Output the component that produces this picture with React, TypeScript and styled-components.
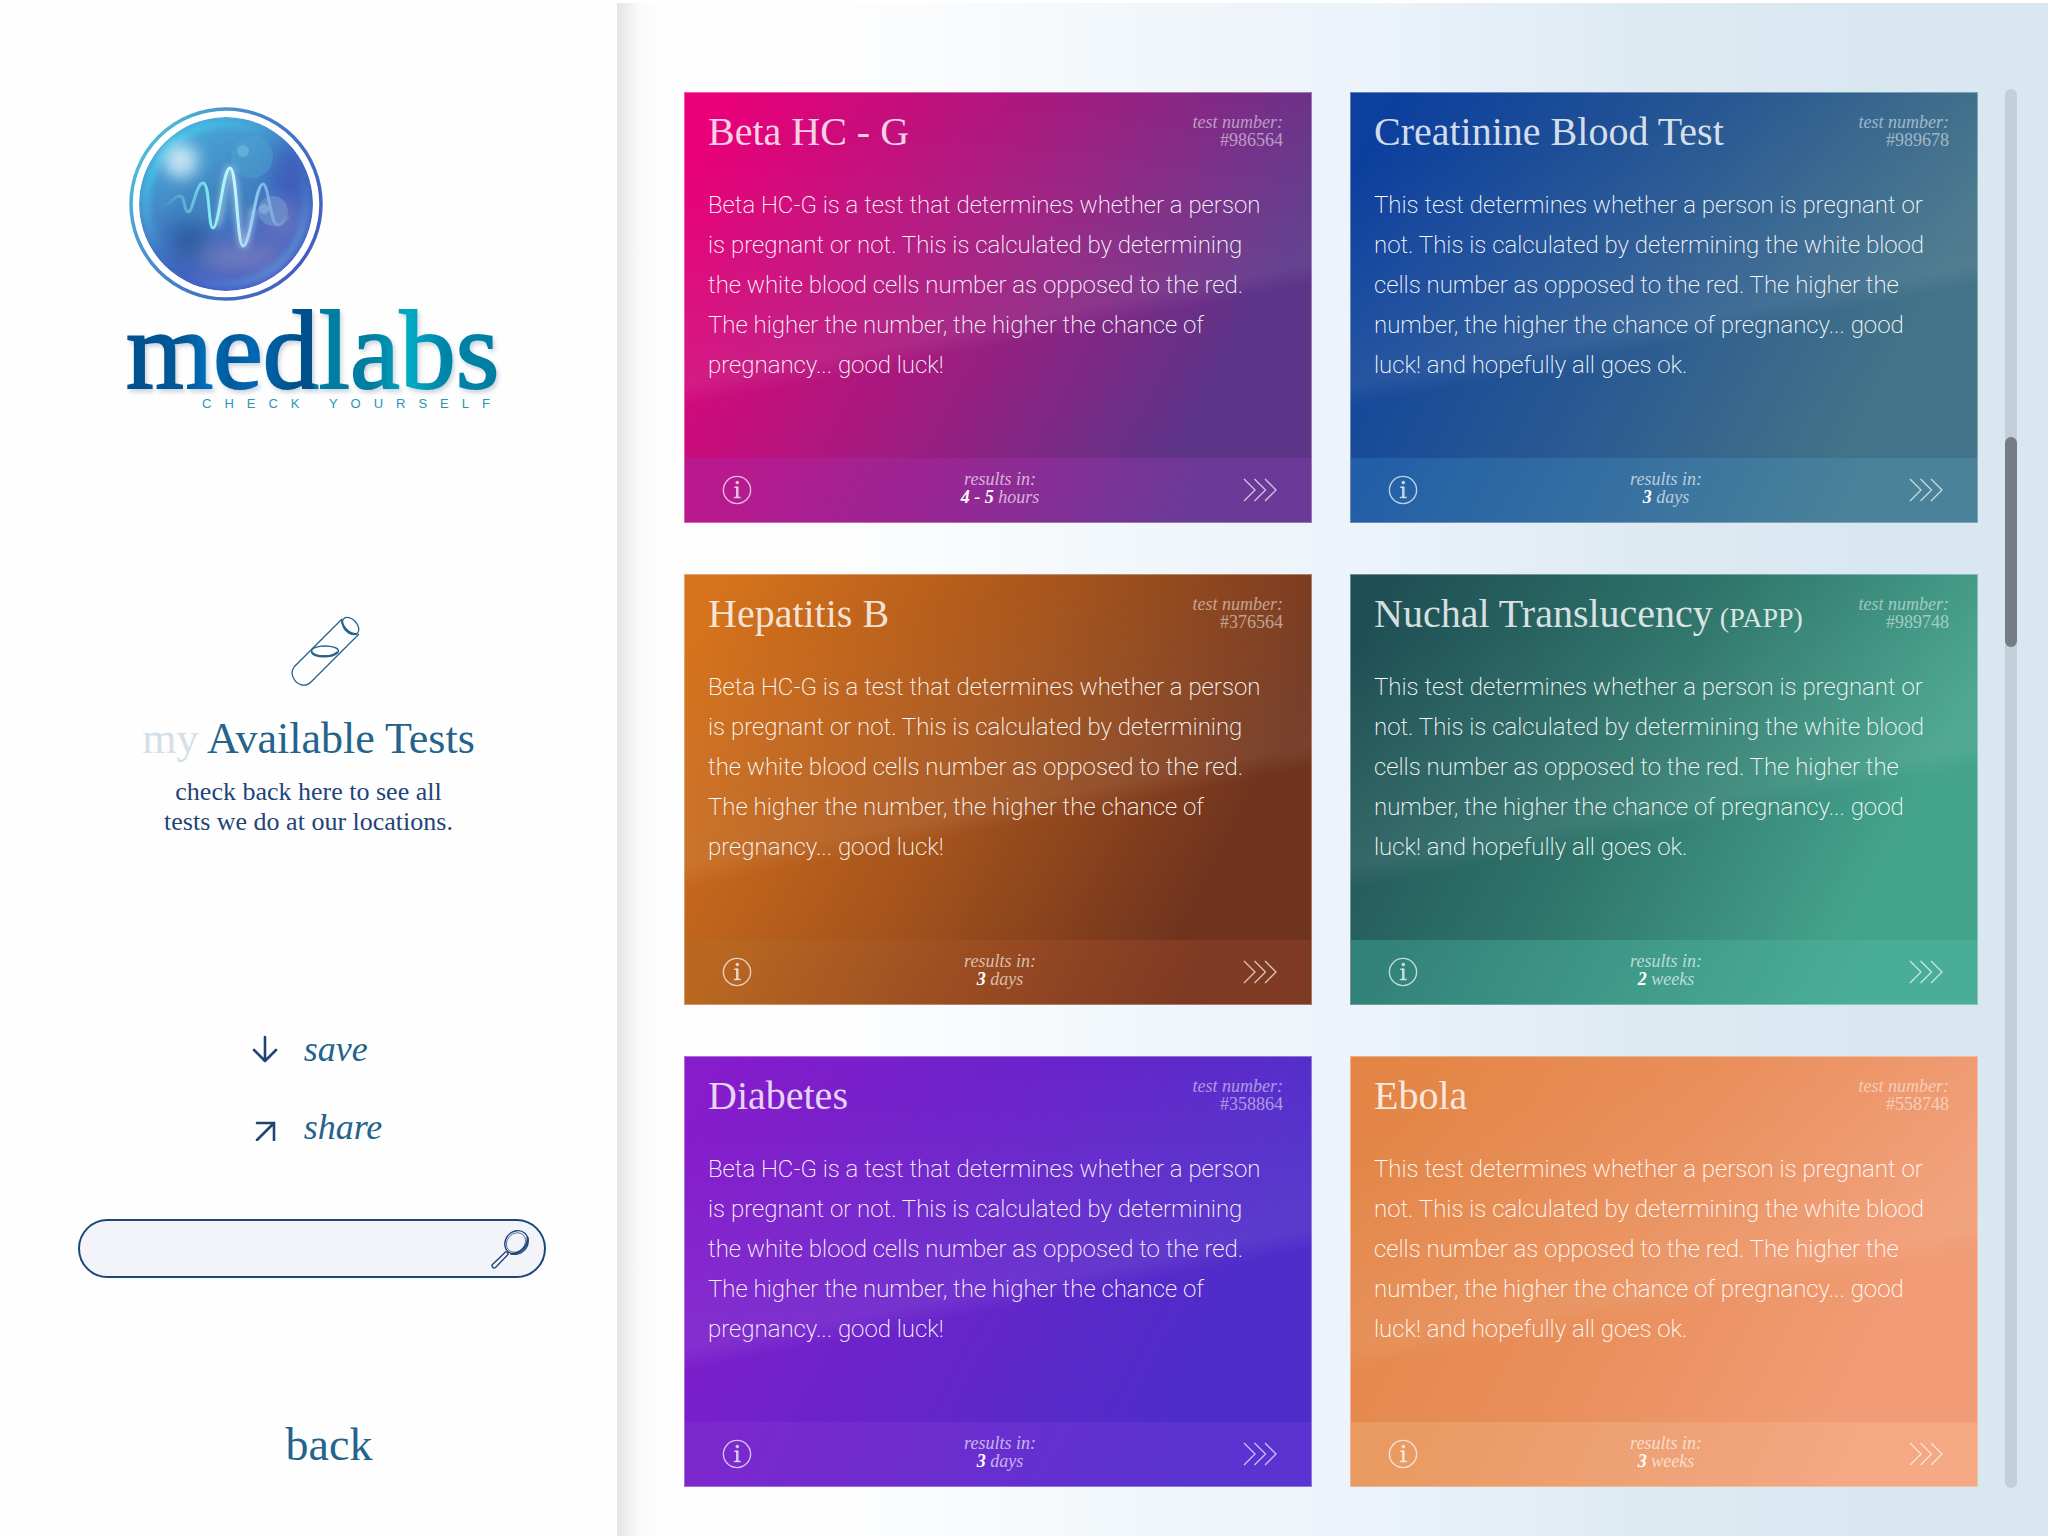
import React from "react";
import styled, { createGlobalStyle } from "styled-components";

const serif = `"Liberation Serif", "Times New Roman", serif`;
const sans = `Roboto, "Liberation Sans", Arial, sans-serif`;

const GlobalStyle = createGlobalStyle`
  *, *::before, *::after { box-sizing: border-box; }
  body { margin: 0; background: #fff; font-family: ${serif}; }
  h1, h2, p, dl, dd, dt { margin: 0; font-weight: 400; }
  button { padding: 0; border: 0; background: none; font: inherit; color: inherit; cursor: pointer; }
`;

const Page = styled.div`
  display: flex;
  min-height: 100vh;
`;

const Sidebar = styled.aside`
  flex: 0 0 617px;
  display: flex;
  flex-direction: column;
  align-items: center;
  padding: 107px 71px 0 78px;
  background: #fefefe;
  color: #24638c;
`;

const Brand = styled.div`
  align-self: flex-start;
  display: flex;
  flex-direction: column;
  width: 420px;
  padding-left: 48px;
`;

const Orb = styled.svg`
  width: 200px;
  height: 196px;
`;

const Wordmark = styled.span`
  font-size: 112px;
  line-height: 94px;
  white-space: nowrap;
  color: transparent;
  background: linear-gradient(90deg, #00508c 0%, #00599a 16%, #0070bd 22%, #005a9c 28%, #0069b2 34%, #00508c 46%, #00508c 50%, #007ea2 51%, #007ea2 66%, #00abc4 76%, #0084a8 86%, #007ea2 100%);
  background-clip: text;
  -webkit-background-clip: text;
  -webkit-text-stroke: 2px transparent;
  filter: drop-shadow(2px 3px 2px rgba(60, 80, 120, 0.25));
`;

const Tagline = styled.span`
  padding-left: 76px;
  font-family: "Liberation Sans", Arial, sans-serif;
  font-size: 13px;
  line-height: 14px;
  letter-spacing: 13px;
  white-space: nowrap;
  color: #2a95b2;
`;

const Intro = styled.section`
  display: flex;
  flex-direction: column;
  align-items: center;
  margin-top: 204px;
  padding-right: 7px;
  text-align: center;
`;

const TubeIcon = styled.svg`
  width: 72px;
  height: 72px;
  margin-left: 32px;
`;

const IntroTitle = styled.h1`
  margin-top: 24px;
  font-size: 44px;
  line-height: 56px;
  white-space: nowrap;
`;

const Faded = styled.span`
  color: #d3e0e8;
`;

const IntroText = styled.p`
  margin-top: 10px;
  font-size: 26px;
  line-height: 30px;
  color: #1f4478;
`;

const Actions = styled.nav`
  display: flex;
  flex-direction: column;
  gap: 38px;
  margin-top: 192px;
  padding-left: 10px;
`;

const ActionButton = styled.button`
  display: flex;
  align-items: center;
  gap: 24px;
  font-size: 36px;
  font-style: italic;
  line-height: 40px;

  svg { width: 28px; height: 28px; color: #1f4478; }
`;

const SearchBox = styled.form`
  display: flex;
  align-items: center;
  align-self: stretch;
  height: 59px;
  margin-top: 72px;
  padding: 0 14px 0 24px;
  border: 2px solid #1f4678;
  border-radius: 30px;
  background: #f3f4fa;
`;

const SearchInput = styled.input`
  flex: 1;
  min-width: 0;
  border: 0;
  outline: 0;
  background: none;
  font-family: ${sans};
  font-size: 24px;
  color: #1f4478;
`;

const SearchButton = styled.button`
  display: flex;
  svg { width: 40px; height: 40px; }
`;

const BackLink = styled.a`
  margin-top: 140px;
  padding-left: 34px;
  font-size: 46px;
  line-height: 54px;
  color: inherit;
  text-decoration: none;
`;

const Main = styled.main`
  flex: 1;
  min-width: 0;
  display: flex;
  gap: 27px;
  padding: 86px 31px 48px 67px;
  border-top: 3px solid #fff;
  background:
    linear-gradient(90deg, #e4e4e6 0, rgba(245, 245, 246, 0.6) 20px, rgba(255, 255, 255, 0) 42px),
    linear-gradient(90deg, #fefefe 15%, #f6fafd 28%, #eef4f9 44%, #ecf3fb 52%, #dfebf3 70%, #d9e7f0 88%);
`;

const CardGrid = styled.div`
  flex: 1;
  display: grid;
  grid-template-columns: repeat(2, minmax(0, 1fr));
  align-content: start;
  gap: 51px 38px;
  padding-top: 3px;
`;

const Card = styled.article<{ $fill: string }>`
  display: flex;
  flex-direction: column;
  min-height: 431px;
  border: 1px solid rgba(255, 255, 255, 0.35);
  background:
    linear-gradient(169deg, rgba(255, 255, 255, 0) 14%, rgba(255, 255, 255, 0.07) 53%, rgba(255, 255, 255, 0) 57%),
    ${(p) => p.$fill};
  background-origin: border-box;
  color: #fff;
`;

const CardHead = styled.header`
  display: flex;
  justify-content: space-between;
  align-items: flex-start;
  padding: 16px 28px 0 23px;
`;

const CardTitle = styled.h2`
  font-size: 40px;
  line-height: 46px;
  white-space: nowrap;
  color: rgba(255, 255, 255, 0.82);
`;

const TitleNote = styled.span`
  font-size: 28px;
  line-height: 28px;
`;

const TestNumber = styled.p`
  padding-top: 4px;
  font-size: 18px;
  line-height: 18px;
  text-align: right;
  white-space: nowrap;
  color: rgba(255, 255, 255, 0.52);
`;

const Description = styled.p`
  padding: 30px 40px 0 23px;
  font-family: ${sans};
  font-weight: 200;
  font-size: 24px;
  line-height: 40px;
`;

const CardFoot = styled.footer<{ $fill: string }>`
  display: grid;
  grid-template-columns: 1fr auto 1fr;
  align-items: center;
  height: 64px;
  margin-top: auto;
  padding: 0 33px 0 37px;
  background: ${(p) => p.$fill};
  color: rgba(255, 255, 255, 0.7);
`;

const IconButton = styled.button<{ $end?: boolean }>`
  display: flex;
  justify-self: ${(p) => (p.$end ? "end" : "start")};
  svg { width: ${(p) => (p.$end ? 36 : 30)}px; height: 30px; }
`;

const Results = styled.dl`
  padding-bottom: 4px;
  font-size: 18px;
  font-style: italic;
  line-height: 18px;
  text-align: center;
  color: rgba(255, 255, 255, 0.65);

  strong { color: #fff; }
`;

const ScrollTrack = styled.div`
  flex: 0 0 12px;
  display: grid;
  grid-template-rows: 348fr 210fr 841fr;
  border-radius: 6px;
  background: #c4d0d9;
`;

const ScrollThumb = styled.div`
  grid-row: 2;
  border-radius: 6px;
  background: #757c83;
`;

const BETA =
  "Beta HC-G is a test that determines whether a person is pregnant or not. This is calculated by determining the white blood cells number as opposed to the red. The higher the number, the higher the chance of pregnancy... good luck!";
const GENERAL =
  "This test determines whether a person is pregnant or not. This is calculated by determining the white blood cells number as opposed to the red. The higher the number, the higher the chance of pregnancy... good luck! and hopefully all goes ok.";

const fill = (a: string, b: string, c: string) =>
  `linear-gradient(118deg, ${a} 5%, ${b} 45%, ${c} 80%)`;

const TESTS = [
  { title: "Beta HC - G", num: "#986564", text: BETA, wait: "4 - 5", unit: "hours",
    body: fill("#ea0078", "#a31b80", "#5c3488"), foot: fill("#ba188e", "#942894", "#6b3a98") },
  { title: "Creatinine Blood Test", num: "#989678", text: GENERAL, wait: "3", unit: "days",
    body: fill("#0c3f9e", "#285892", "#437388"), foot: fill("#235fa7", "#3871a0", "#4a8299") },
  { title: "Hepatitis B", num: "#376564", text: BETA, wait: "3", unit: "days",
    body: fill("#d6731c", "#a6541c", "#70341e"), foot: fill("#b96821", "#9b4c22", "#7e3a23") },
  { title: "Nuchal Translucency", note: "(PAPP)", num: "#989748", text: GENERAL, wait: "2", unit: "weeks",
    body: fill("#1f4f55", "#30766b", "#44a38b"), foot: fill("#32817a", "#409a88", "#4aad98") },
  { title: "Diabetes", num: "#358864", text: BETA, wait: "3", unit: "days",
    body: fill("#861ccb", "#6824cb", "#4d2dc9"), foot: fill("#7c28cd", "#6a2ecf", "#5a33d0") },
  { title: "Ebola", num: "#558748", text: GENERAL, wait: "3", unit: "weeks",
    body: fill("#e28545", "#e98f5b", "#f19c76"), foot: fill("#e99a60", "#eea174", "#f4a884") },
];

const InfoIcon = () => (
  <svg viewBox="0 0 30 30" fill="none" stroke="currentColor">
    <circle cx="15" cy="15" r="13.6" strokeWidth="1.4" />
    <circle cx="15.3" cy="7.600" r="1.800" fill="currentColor" stroke="none" />
    <path d="M12.2 12.200h3.3M11.800 22.500h7" strokeWidth="1.4" />
    <path d="M15.3 11.600v10.900" strokeWidth="2.6" />
  </svg>
);

const ChevronsIcon = () => (
  <svg viewBox="0 0 36 30" fill="none" stroke="currentColor" strokeWidth="1.3">
    <path d="M2 4l11 11L2 26M12.500 4l11 11-11 11M23 4l11 11-11 11" />
  </svg>
);

const Logo = () => (
  <Orb viewBox="0 0 200 196" role="img" aria-label="medlabs">
    <defs>
      <linearGradient id="ring" x1="0" y1="0.2" x2="1" y2="0.8">
        <stop offset="0" stopColor="#50c6dc" />
        <stop offset="0.25" stopColor="#4a98cf" />
        <stop offset="0.6" stopColor="#4474c6" />
        <stop offset="1" stopColor="#4459c2" />
      </linearGradient>
      <linearGradient id="ball" x1="0.2" y1="0" x2="0.7" y2="1">
        <stop offset="0" stopColor="#48b0da" />
        <stop offset="0.4" stopColor="#458ac9" />
        <stop offset="0.7" stopColor="#4269c2" />
        <stop offset="1" stopColor="#4a57cb" />
      </linearGradient>
      <linearGradient id="wave" x1="0" x2="1" y1="0" y2="0">
        <stop offset="0" stopColor="#7fdfe8" stopOpacity="0.05" />
        <stop offset="0.18" stopColor="#7fdfe8" stopOpacity="0.5" />
        <stop offset="0.36" stopColor="#7fe6f0" />
        <stop offset="0.55" stopColor="#c4fbff" />
        <stop offset="0.75" stopColor="#8cc4ee" />
        <stop offset="1" stopColor="#8cc4ee" stopOpacity="0.2" />
      </linearGradient>
      <linearGradient id="rim" x1="0" y1="0" x2="1" y2="1">
        <stop offset="0.1" stopColor="#42d2f2" />
        <stop offset="0.45" stopColor="#42c2ee" stopOpacity="0" />
        <stop offset="0.6" stopColor="#5aa0e0" stopOpacity="0" />
        <stop offset="0.85" stopColor="#58a8d8" stopOpacity="0.7" />
      </linearGradient>
      <filter id="soft" x="-100%" y="-100%" width="300%" height="300%"><feGaussianBlur stdDeviation="11" /></filter>
      <filter id="glow" x="-50%" y="-50%" width="200%" height="200%"><feGaussianBlur stdDeviation="3" /></filter>
      <filter id="haze" x="-100%" y="-100%" width="300%" height="300%"><feGaussianBlur stdDeviation="8" /></filter>
      <clipPath id="inner"><circle cx="100" cy="97" r="87" /></clipPath>
    </defs>
    <circle cx="100" cy="97" r="95" fill="#fff" stroke="url(#ring)" strokeWidth="3.500" />
    <g clipPath="url(#inner)">
      <circle cx="100" cy="97" r="87" fill="url(#ball)" />
      <ellipse cx="166" cy="66" rx="20" ry="34" fill="#3a50b6" opacity="0.65" filter="url(#soft)" />
      <ellipse cx="64" cy="132" rx="20" ry="20" fill="#27528f" opacity="0.7" filter="url(#soft)" />
      <ellipse cx="95" cy="94" rx="46" ry="26" fill="#3c8ab8" opacity="0.45" filter="url(#soft)" />
      <ellipse cx="116" cy="150" rx="44" ry="14" fill="#8084b8" opacity="0.8" filter="url(#soft)" />
      <ellipse cx="156" cy="114" rx="20" ry="22" fill="#7a7ab8" opacity="0.65" filter="url(#soft)" />
      <circle cx="100" cy="97" r="80" fill="none" stroke="url(#rim)" strokeWidth="6" filter="url(#glow)" />
      <circle cx="55" cy="54" r="18" fill="#d0eefa" opacity="0.75" filter="url(#haze)" />
      <circle cx="54" cy="52" r="9" fill="#f0faff" opacity="0.6" filter="url(#haze)" />
      <circle cx="126" cy="50" r="21" fill="#4ba6d0" opacity="0.45" />
      <circle cx="117" cy="44" r="6" fill="#7cc4e0" opacity="0.5" />
      <circle cx="147" cy="104" r="15" fill="#7fa6d6" opacity="0.45" />
      <circle cx="138" cy="102" r="5" fill="#a2c6ea" opacity="0.45" />
    </g>
    <g fill="none" strokeLinecap="round" strokeLinejoin="round">
      <path d="M91 118C97 108 98 61 104 61S112 138 117 138c5 0 7-20 10-35" stroke="#fff" strokeOpacity="0.5" strokeWidth="5" filter="url(#glow)" />
      <path d="M38 99C45 96 49 89 54 89S58 105 62 105c5 0 8-29 15-29S82 121 87 121C93 121 97 61 104 61S111 139 117 139c8 0 12-62 20-62 6 0 7 41 15 41 5 0 7-5 10-8" stroke="url(#wave)" strokeWidth="3" />
    </g>
  </Orb>
);

export default function App() {
  return (
    <Page>
      <GlobalStyle />
      <Sidebar>
        <Brand>
          <Logo />
          <Wordmark>medlabs</Wordmark>
          <Tagline>CHECK YOURSELF</Tagline>
        </Brand>

        <Intro>
          <TubeIcon viewBox="0 0 72 72" fill="none" stroke="#24638c" strokeWidth="1.300" aria-hidden="true">
            <path d="M53 4L5 52a11 11 0 0 0 0 12c4 7 12 8 17 3L70 19" />
            <ellipse cx="61.500" cy="11" rx="6.500" ry="10" transform="rotate(-43 61.500 11)" />
            <path d="M53 5c0 7 8 15 15 14" strokeWidth="2" />
            <ellipse cx="36" cy="36" rx="13.500" ry="5" />
            <path d="M22.500 37c3 6 21 6 26 0" strokeWidth="2" />
          </TubeIcon>
          <IntroTitle><Faded>my</Faded> Available Tests</IntroTitle>
          <IntroText>check back here to see all<br />tests we do at our locations.</IntroText>
        </Intro>

        <Actions aria-label="Actions">
          <ActionButton type="button">
            <svg viewBox="0 0 28 28" fill="none" stroke="currentColor" strokeWidth="2.600" strokeLinecap="round" strokeLinejoin="round">
              <path d="M13 2v24M2 15l11 11 11-11" />
            </svg>
            save
          </ActionButton>
          <ActionButton type="button">
            <svg viewBox="0 0 28 28" fill="none" stroke="currentColor" strokeWidth="2.600" strokeLinecap="round">
              <path d="M5 27L22 10M5 10h17v17" />
            </svg>
            share
          </ActionButton>
        </Actions>

        <SearchBox role="search" onSubmit={(e) => e.preventDefault()}>
          <SearchInput type="text" aria-label="Search tests" />
          <SearchButton type="submit" aria-label="Search">
            <svg viewBox="0 0 40 40" fill="none" stroke="#1f4678">
              <ellipse cx="26.500" cy="13.500" rx="11" ry="12.500" transform="rotate(42 26.500 13.500)" strokeWidth="1.400" />
              <ellipse cx="26" cy="13.500" rx="8.800" ry="10.500" transform="rotate(42 26 13.500)" strokeWidth="0.700" />
              <path d="M37.500 8c1 8-6 17-17 17" strokeWidth="2" />
              <path d="M15.500 23L2.500 35.500c-1.500 2 1 4.500 3 3L18 25.500c0-2-1-3-2.500-2.500z" strokeWidth="1.400" />
            </svg>
          </SearchButton>
        </SearchBox>

        <BackLink href="#">back</BackLink>
      </Sidebar>

      <Main>
        <CardGrid>
          {TESTS.map((t) => (
            <Card key={t.num} $fill={t.body}>
              <CardHead>
                <CardTitle>
                  {t.title}
                  {t.note && <TitleNote> {t.note}</TitleNote>}
                </CardTitle>
                <TestNumber><em>test number:</em><br />{t.num}</TestNumber>
              </CardHead>
              <Description>{t.text}</Description>
              <CardFoot $fill={t.foot}>
                <IconButton type="button" aria-label="Information"><InfoIcon /></IconButton>
                <Results>
                  <dt>results in:</dt>
                  <dd><strong>{t.wait}</strong> {t.unit}</dd>
                </Results>
                <IconButton type="button" aria-label="Open" $end><ChevronsIcon /></IconButton>
              </CardFoot>
            </Card>
          ))}
        </CardGrid>
        <ScrollTrack aria-hidden="true"><ScrollThumb /></ScrollTrack>
      </Main>
    </Page>
  );
}
